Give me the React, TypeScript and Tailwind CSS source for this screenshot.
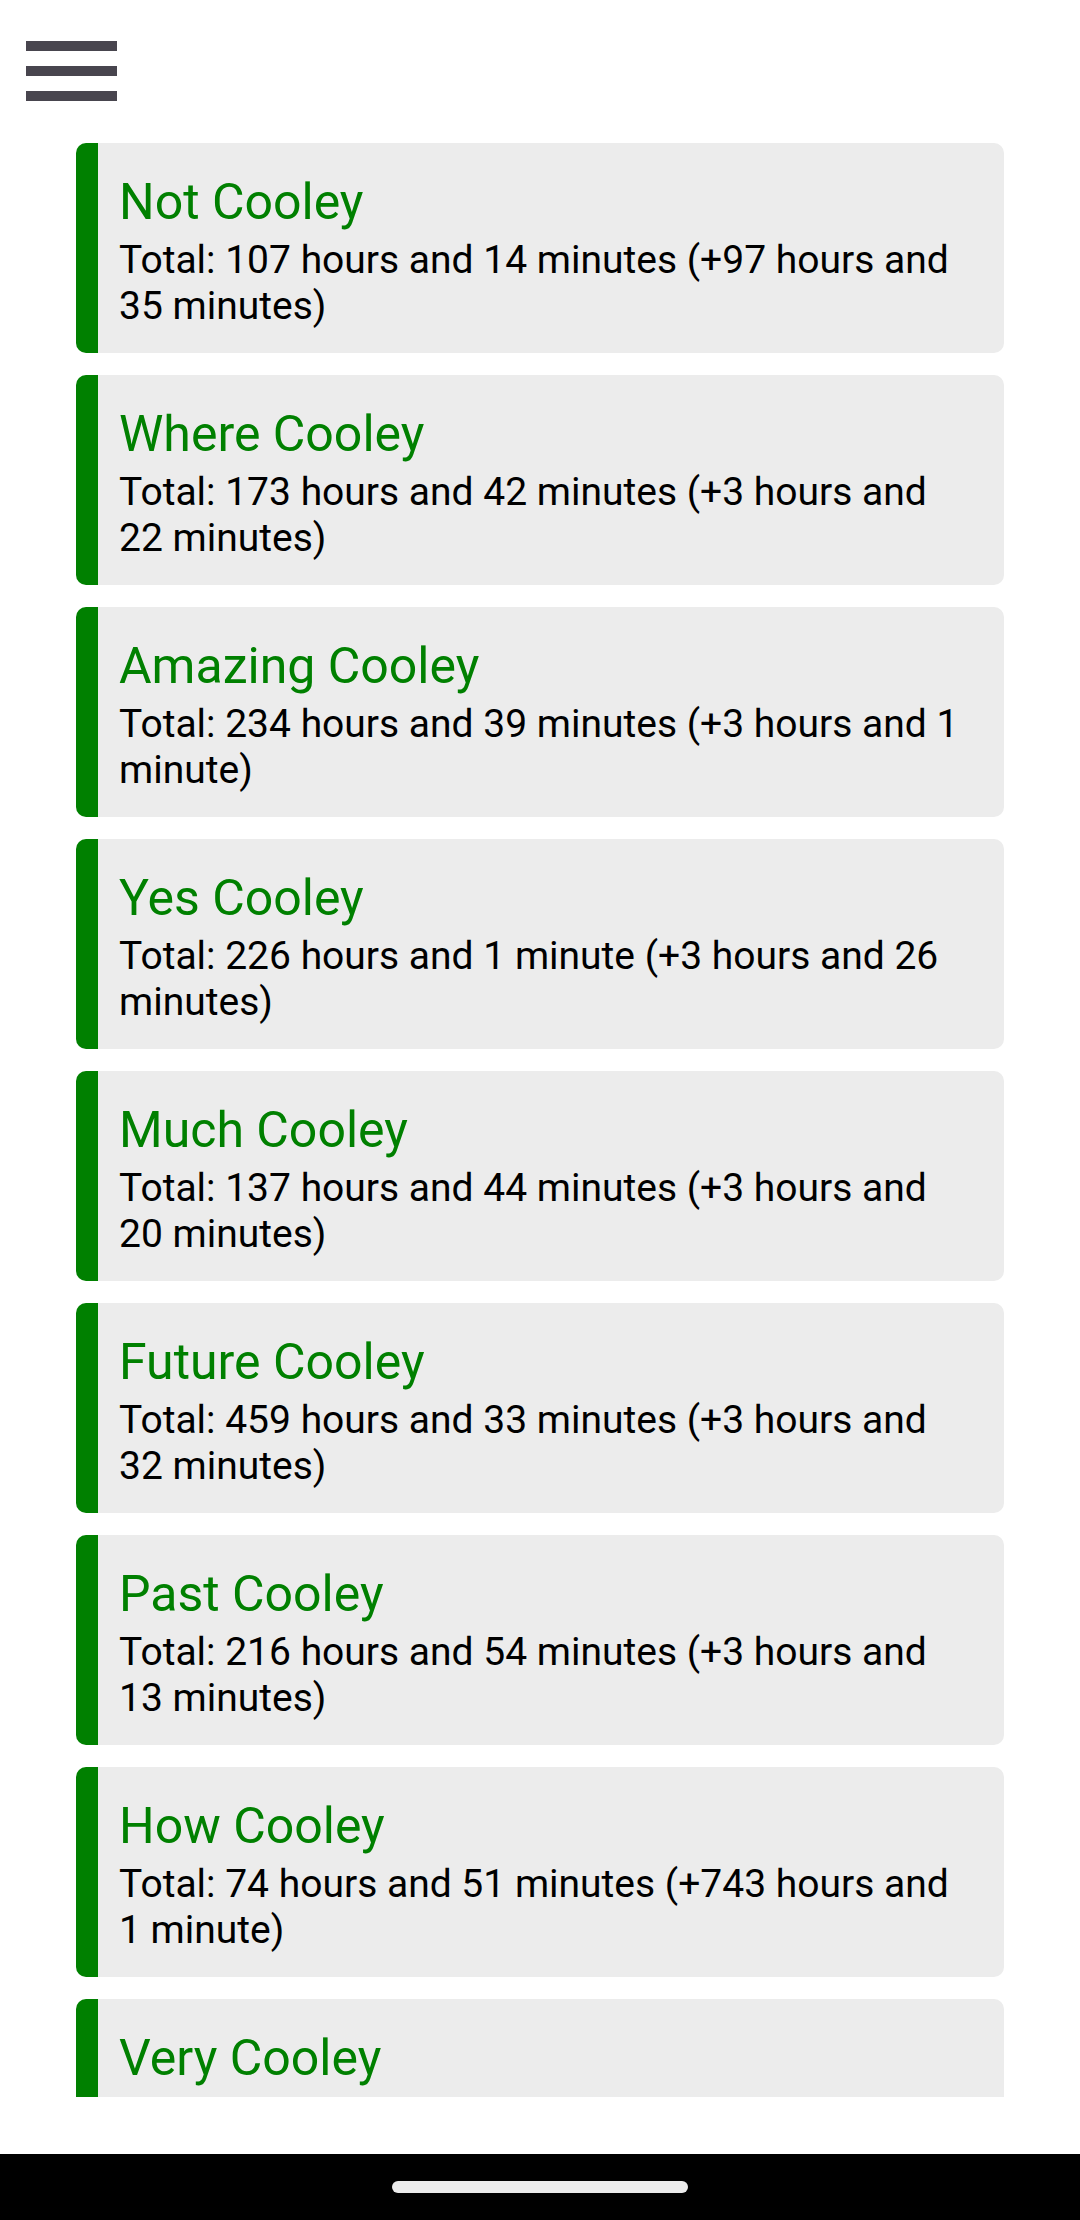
import React from "react";

const items: { title: string; body: string }[] = [
  { title: "Not Cooley", body: "Total: 107 hours and 14 minutes (+97 hours and 35 minutes)" },
  { title: "Where Cooley", body: "Total: 173 hours and 42 minutes (+3 hours and 22 minutes)" },
  { title: "Amazing Cooley", body: "Total: 234 hours and 39 minutes (+3 hours and 1 minute)" },
  { title: "Yes Cooley", body: "Total: 226 hours and 1 minute (+3 hours and 26 minutes)" },
  { title: "Much Cooley", body: "Total: 137 hours and 44 minutes (+3 hours and 20 minutes)" },
  { title: "Future Cooley", body: "Total: 459 hours and 33 minutes (+3 hours and 32 minutes)" },
  { title: "Past Cooley", body: "Total: 216 hours and 54 minutes (+3 hours and 13 minutes)" },
  { title: "How Cooley", body: "Total: 74 hours and 51 minutes (+743 hours and 1 minute)" },
  { title: "Very Cooley", body: "Total: 85 hours and 1 minute (+3 hours and 2 minutes)" },
];

export default function App() {
  return (
    <div
      className="w-[1080px] h-[2220px] flex flex-col bg-white overflow-hidden"
      style={{ fontFamily: "Roboto, 'Noto Sans', sans-serif" }}
    >
      <div className="h-[122px] shrink-0 pl-[26px] pt-[41px]">
        <div className="flex flex-col gap-[15px] w-[91px]">
          <div className="h-[10px] bg-[#48454e]" />
          <div className="h-[10px] bg-[#48454e]" />
          <div className="h-[10px] bg-[#48454e]" />
        </div>
      </div>
      <div className="h-[1975px] shrink-0 overflow-hidden pt-[21px]">
        <div className="flex flex-col gap-[22px] pl-[76px] pr-[76px]">
          {items.map((it) => (
            <div
              key={it.title}
              className="h-[210px] shrink-0 rounded-[10px] bg-[#ececec] border-l-[22px] border-[#008000] pl-[21px] pr-[34px] pt-[29px]"
            >
              <div className="text-[50px] leading-[60px] text-[#008000]">{it.title}</div>
              <div className="mt-[5px] text-[39px] leading-[46px] text-black">{it.body}</div>
            </div>
          ))}
        </div>
      </div>
      <div className="h-[57px] shrink-0" />
      <div className="h-[66px] shrink-0 bg-black flex items-start justify-center pt-[27px]">
        <div className="w-[296px] h-[12px] rounded-full bg-[#ececec]" />
      </div>
    </div>
  );
}
